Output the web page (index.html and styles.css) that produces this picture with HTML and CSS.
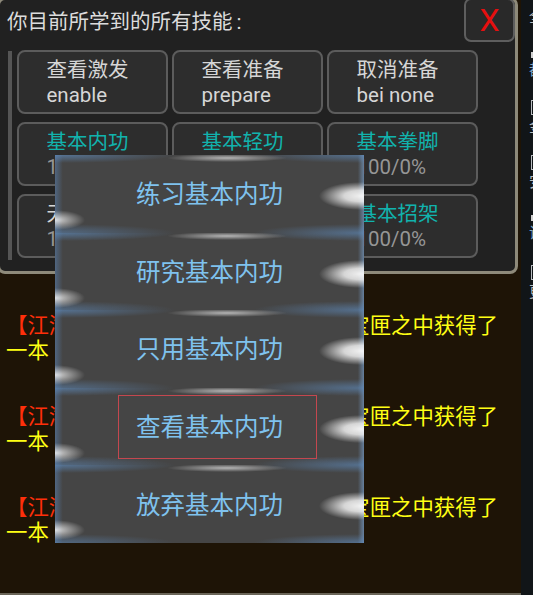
FILE: index.html
```html
<!DOCTYPE html>
<html lang="zh-CN">
<head>
<meta charset="utf-8">
<title>技能</title>
<link rel="stylesheet" href="styles.css">
</head>
<body>
<div class="game">
  <section class="panel">
    <header class="panel-head">
      <h1 class="panel-title">你目前所学到的所有技能<span class="colon">:</span></h1>
      <button class="close">X</button>
    </header>
    <div class="panel-body">
      <div class="scrollbar"></div>
      <div class="skills">
        <div class="skill"><span class="name">查看激发</span><span class="sub bright">enable</span></div>
        <div class="skill"><span class="name">查看准备</span><span class="sub bright">prepare</span></div>
        <div class="skill"><span class="name">取消准备</span><span class="sub bright">bei none</span></div>
        <div class="skill"><span class="name teal">基本内功</span><span class="sub">100/0%</span></div>
        <div class="skill"><span class="name teal">基本轻功</span><span class="sub">100/0%</span></div>
        <div class="skill"><span class="name teal">基本拳脚</span><span class="sub">100/0%</span></div>
        <div class="skill"><span class="name">无名剑法</span><span class="sub">100/0%</span></div>
        <div class="skill"><span class="name teal">基本闪躲</span><span class="sub">100/0%</span></div>
        <div class="skill"><span class="name teal">基本招架</span><span class="sub">100/0%</span></div>
      </div>
    </div>
  </section>
  <div class="log">
    <p class="msg"><span class="red">【江湖】</span>某位少侠从路边捡到的一个宝匣之中获得了一本《基本内功》。</p>
    <p class="msg"><span class="red">【江湖】</span>某位少侠从路边捡到的一个宝匣之中获得了一本《基本内功》。</p>
    <p class="msg"><span class="red">【江湖】</span>某位少侠从路边捡到的一个宝匣之中获得了一本《基本内功》。</p>
  </div>
</div>
<aside class="side">
  <div class="side-item"><span class="glyph">全</span></div>
  <div class="side-item"><span class="dot"></span><span class="glyph blue">都</span></div>
  <div class="side-item"><span class="box"></span><span class="glyph">金</span></div>
  <div class="side-item"><span class="box"></span><span class="glyph">安</span></div>
  <div class="side-item"><span class="dot"></span><span class="glyph blue">设</span></div>
  <div class="side-item"><span class="box"></span><span class="glyph">更</span></div>
</aside>
<nav class="menu">
  <div class="menu-item"><span class="menu-label">练习基本内功</span></div>
  <div class="menu-item"><span class="menu-label">研究基本内功</span></div>
  <div class="menu-item"><span class="menu-label">只用基本内功</span></div>
  <div class="menu-item"><span class="menu-label selected">查看基本内功</span></div>
  <div class="menu-item"><span class="menu-label">放弃基本内功</span></div>
</nav>
</body>
</html>
```

FILE: styles.css
```css
* { box-sizing: border-box; }
html, body { margin: 0; height: 595px; overflow: hidden; }
body {
  display: flex;
  background: #111518;
  font-family: Roboto, "Noto Sans CJK SC", sans-serif;
}
.game {
  width: 521px;
  height: 595px;
  flex: none;
  background: #1e1406;
  border-bottom: 2px solid #6a6558;
}
.panel {
  width: 521px;
  height: 277px;
  margin: -3px 0 0 -3px;
  background: #212121;
  border: 3px solid #8e8a7a;
  border-radius: 8px;
}
.panel-head {
  display: flex;
  justify-content: space-between;
  height: 50px;
  padding-left: 7px;
}
.panel-title {
  margin: 0;
  font-size: 20.5px;
  font-weight: 400;
  line-height: 44px;
  color: #dcdcdc;
}
.colon { margin-left: 4px; }
.close {
  width: 51px;
  height: 44px;
  margin: -2px 0 0;
  padding: 0;
  background: #292929;
  border: 2px solid #5e5e5e;
  border-radius: 7px;
  color: #e60f0f;
  font-family: Roboto, sans-serif;
  font-size: 32px;
  line-height: 40px;
}
.panel-body {
  display: flex;
  padding-left: 8px;
  gap: 5px;
}
.scrollbar {
  width: 4px;
  height: 209px;
  margin-top: 1px;
  background: #555;
}
.skills {
  display: grid;
  grid-template-columns: repeat(3, 151px);
  grid-auto-rows: 64px;
  gap: 8px 4px;
}
.skill {
  display: flex;
  flex-direction: column;
  justify-content: center;
  padding: 2px 0 0 27.5px;
  background: #2d2d2d;
  border: 2px solid #5c5c5c;
  border-radius: 8px;
  font-size: 20.5px;
  line-height: 25px;
}
.name { color: #d6d6d6; }
.teal { color: #11b3ad; }
.sub { color: #969696; }
.bright { color: #d6d6d6; }
.log { padding: 39px 0 0 6px; }
.msg {
  margin: 0 0 41px;
  width: 500px;
  font-size: 21.4px;
  line-height: 25px;
  color: #ffff14;
}
.red { color: #ff2f0a; }
.side {
  flex: 1;
  min-width: 0;
  overflow: hidden;
  padding: 8px 0 0 8px;
  display: grid;
  grid-template-rows: 44px 48px 55px 60px 50px auto;
  align-content: start;
}
.side-item {
  display: flex;
  flex-direction: column;
  font-size: 15px;
  line-height: 18px;
  color: #b8bcc0;
}
.glyph { display: block; width: 15px; }
.blue { color: #7ea4c4; }
.dot { display: block; width: 6px; height: 6px; margin: 0 0 3px 2px; background: #cfcfcf; }
.box { display: block; width: 12px; height: 15px; margin: 0 0 3px 2px; border: 1px solid #b8bcc0; }
.menu {
  position: absolute;
  left: 55px;
  top: 155px;
  width: 309px;
  height: 388px;
  display: grid;
  grid-template-rows: repeat(5, 1fr);
}
.menu-item {
  display: flex;
  align-items: center;
  justify-content: center;
  background:
    radial-gradient(ellipse 42px 14px at 306px 41px, rgba(255,255,255,.92), rgba(255,255,255,.78) 40%, rgba(255,255,255,0) 100%),
    radial-gradient(ellipse 30px 10px at 0 65px, rgba(255,255,255,.8), rgba(255,255,255,0) 100%),
    radial-gradient(ellipse 60px 4px at 172px 3px, rgba(255,255,255,.6), rgba(255,255,255,0) 100%),
    radial-gradient(ellipse 120px 8px at 0 0, rgba(95,140,190,.65), rgba(95,140,190,0) 100%),
    radial-gradient(ellipse 110px 8px at 100% 0, rgba(95,140,190,.6), rgba(95,140,190,0) 100%),
    radial-gradient(ellipse 120px 9px at 0 100%, rgba(95,140,190,.5), rgba(95,140,190,0) 100%),
    radial-gradient(ellipse 110px 9px at 100% 100%, rgba(95,140,190,.6), rgba(95,140,190,0) 100%),
    linear-gradient(90deg, rgba(90,135,190,.5), rgba(90,135,190,0) 2.5%, rgba(90,135,190,0) 98%, rgba(120,160,205,.65)),
    #454545;
}
.menu-label {
  padding-top: 3px;
  font-size: 24.5px;
  color: #7fc2ee;
  text-align: center;
  line-height: 30px;
}
.selected {
  display: flex;
  align-items: center;
  justify-content: flex-start;
  width: 199px;
  height: 64px;
  margin-left: 16px;
  padding-left: 17px;
  border: 1px solid #c4474f;
}
```
